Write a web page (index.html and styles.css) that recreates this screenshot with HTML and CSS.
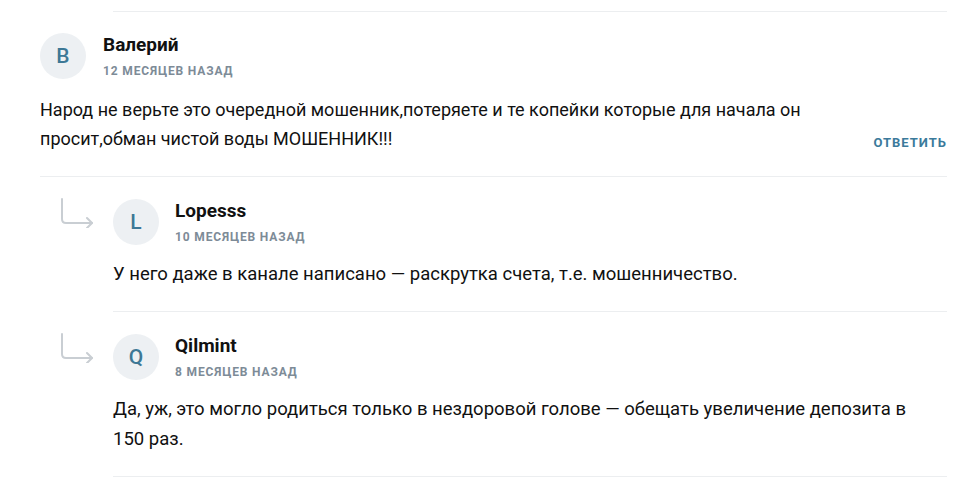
FILE: index.html
```html
<!DOCTYPE html>
<html lang="ru">
<head>
<meta charset="utf-8">
<title>Комментарии</title>
<link rel="stylesheet" href="styles.css">
</head>
<body>
<div class="comments">
  <div class="prev-reply"></div>

  <div class="comment">
    <div class="head">
      <div class="avatar">B</div>
      <div class="meta">
        <div class="name">Валерий</div>
        <div class="date">12 месяцев назад</div>
      </div>
    </div>
    <div class="body-row">
      <p class="text">Народ не верьте это очередной мошенник,потеряете и те копейки которые для начала он просит,обман чистой воды МОШЕННИК!!!</p>
      <a class="reply-btn" href="#">Ответить</a>
    </div>
  </div>

  <div class="reply">
    <div class="reply-icon">
      <svg width="34" height="30" viewBox="0 0 34 30" fill="none" stroke="#c9ced3" stroke-width="2" stroke-linecap="round" stroke-linejoin="round">
        <path d="M2 1 V21 Q2 25 6 25 H32"/>
        <path d="M27 20 L32 25 L27 30"/>
      </svg>
    </div>
    <div class="comment reply-body">
      <div class="head">
        <div class="avatar">L</div>
        <div class="meta">
          <div class="name">Lopesss</div>
          <div class="date">10 месяцев назад</div>
        </div>
      </div>
      <p class="text">У него даже в канале написано — раскрутка счета, т.е. мошенничество.</p>
    </div>
  </div>

  <div class="reply">
    <div class="reply-icon">
      <svg width="34" height="30" viewBox="0 0 34 30" fill="none" stroke="#c9ced3" stroke-width="2" stroke-linecap="round" stroke-linejoin="round">
        <path d="M2 1 V21 Q2 25 6 25 H32"/>
        <path d="M27 20 L32 25 L27 30"/>
      </svg>
    </div>
    <div class="comment reply-body">
      <div class="head">
        <div class="avatar">Q</div>
        <div class="meta">
          <div class="name">Qilmint</div>
          <div class="date">8 месяцев назад</div>
        </div>
      </div>
      <p class="text">Да, уж, это могло родиться только в нездоровой голове — обещать увеличение депозита в 150 раз.</p>
    </div>
  </div>
</div>
</body>
</html>
```

FILE: styles.css
```css
html, body {
  margin: 0;
  padding: 0;
  background: #ffffff;
}

body {
  font-family: Roboto, "Liberation Sans", Arial, sans-serif;
  color: #111111;
}

.comments {
  width: 907px;
  padding-left: 40px;
}

.prev-reply {
  margin-left: 73px;
  height: 11px;
  border-bottom: 1px solid #eceef0;
}

.comment {
  padding: 21px 0 23px;
  border-bottom: 1px solid #eceef0;
}

.head {
  display: flex;
  align-items: center;
  gap: 17px;
}

.avatar {
  width: 46px;
  height: 46px;
  border-radius: 50%;
  background: #edf0f3;
  color: #3d7896;
  display: flex;
  align-items: center;
  justify-content: center;
  font-size: 21px;
  font-weight: 500;
  flex-shrink: 0;
}

.meta {
  display: flex;
  flex-direction: column;
}

.name {
  font-size: 19px;
  font-weight: 700;
  line-height: 24px;
  margin-top: -2px;
}

.date {
  margin-top: 7px;
  font-size: 12px;
  font-weight: 700;
  line-height: 14px;
  letter-spacing: 0.85px;
  text-transform: uppercase;
  color: #7d8b97;
}

.body-row {
  display: flex;
  align-items: flex-end;
  gap: 20px;
}

.text {
  margin: 16px 0 0;
  font-size: 18px;
  line-height: 29px;
  flex: 1;
}

.reply-btn {
  flex-shrink: 0;
  font-size: 13px;
  font-weight: 700;
  letter-spacing: 1px;
  text-transform: uppercase;
  color: #3b7a9b;
  text-decoration: none;
  line-height: 29px;
  margin-bottom: -4px;
}

.reply {
  display: flex;
}

.reply-icon {
  width: 53px;
  padding-left: 20px;
  padding-top: 21px;
  flex-shrink: 0;
}

.reply-body {
  flex: 1;
  padding-top: 22px;
  padding-bottom: 22px;
}

.reply-body .head {
  gap: 16px;
}

.reply-body .text {
  font-size: 18.5px;
  line-height: 30px;
  margin: 14px 40px 0 0;
}
```
